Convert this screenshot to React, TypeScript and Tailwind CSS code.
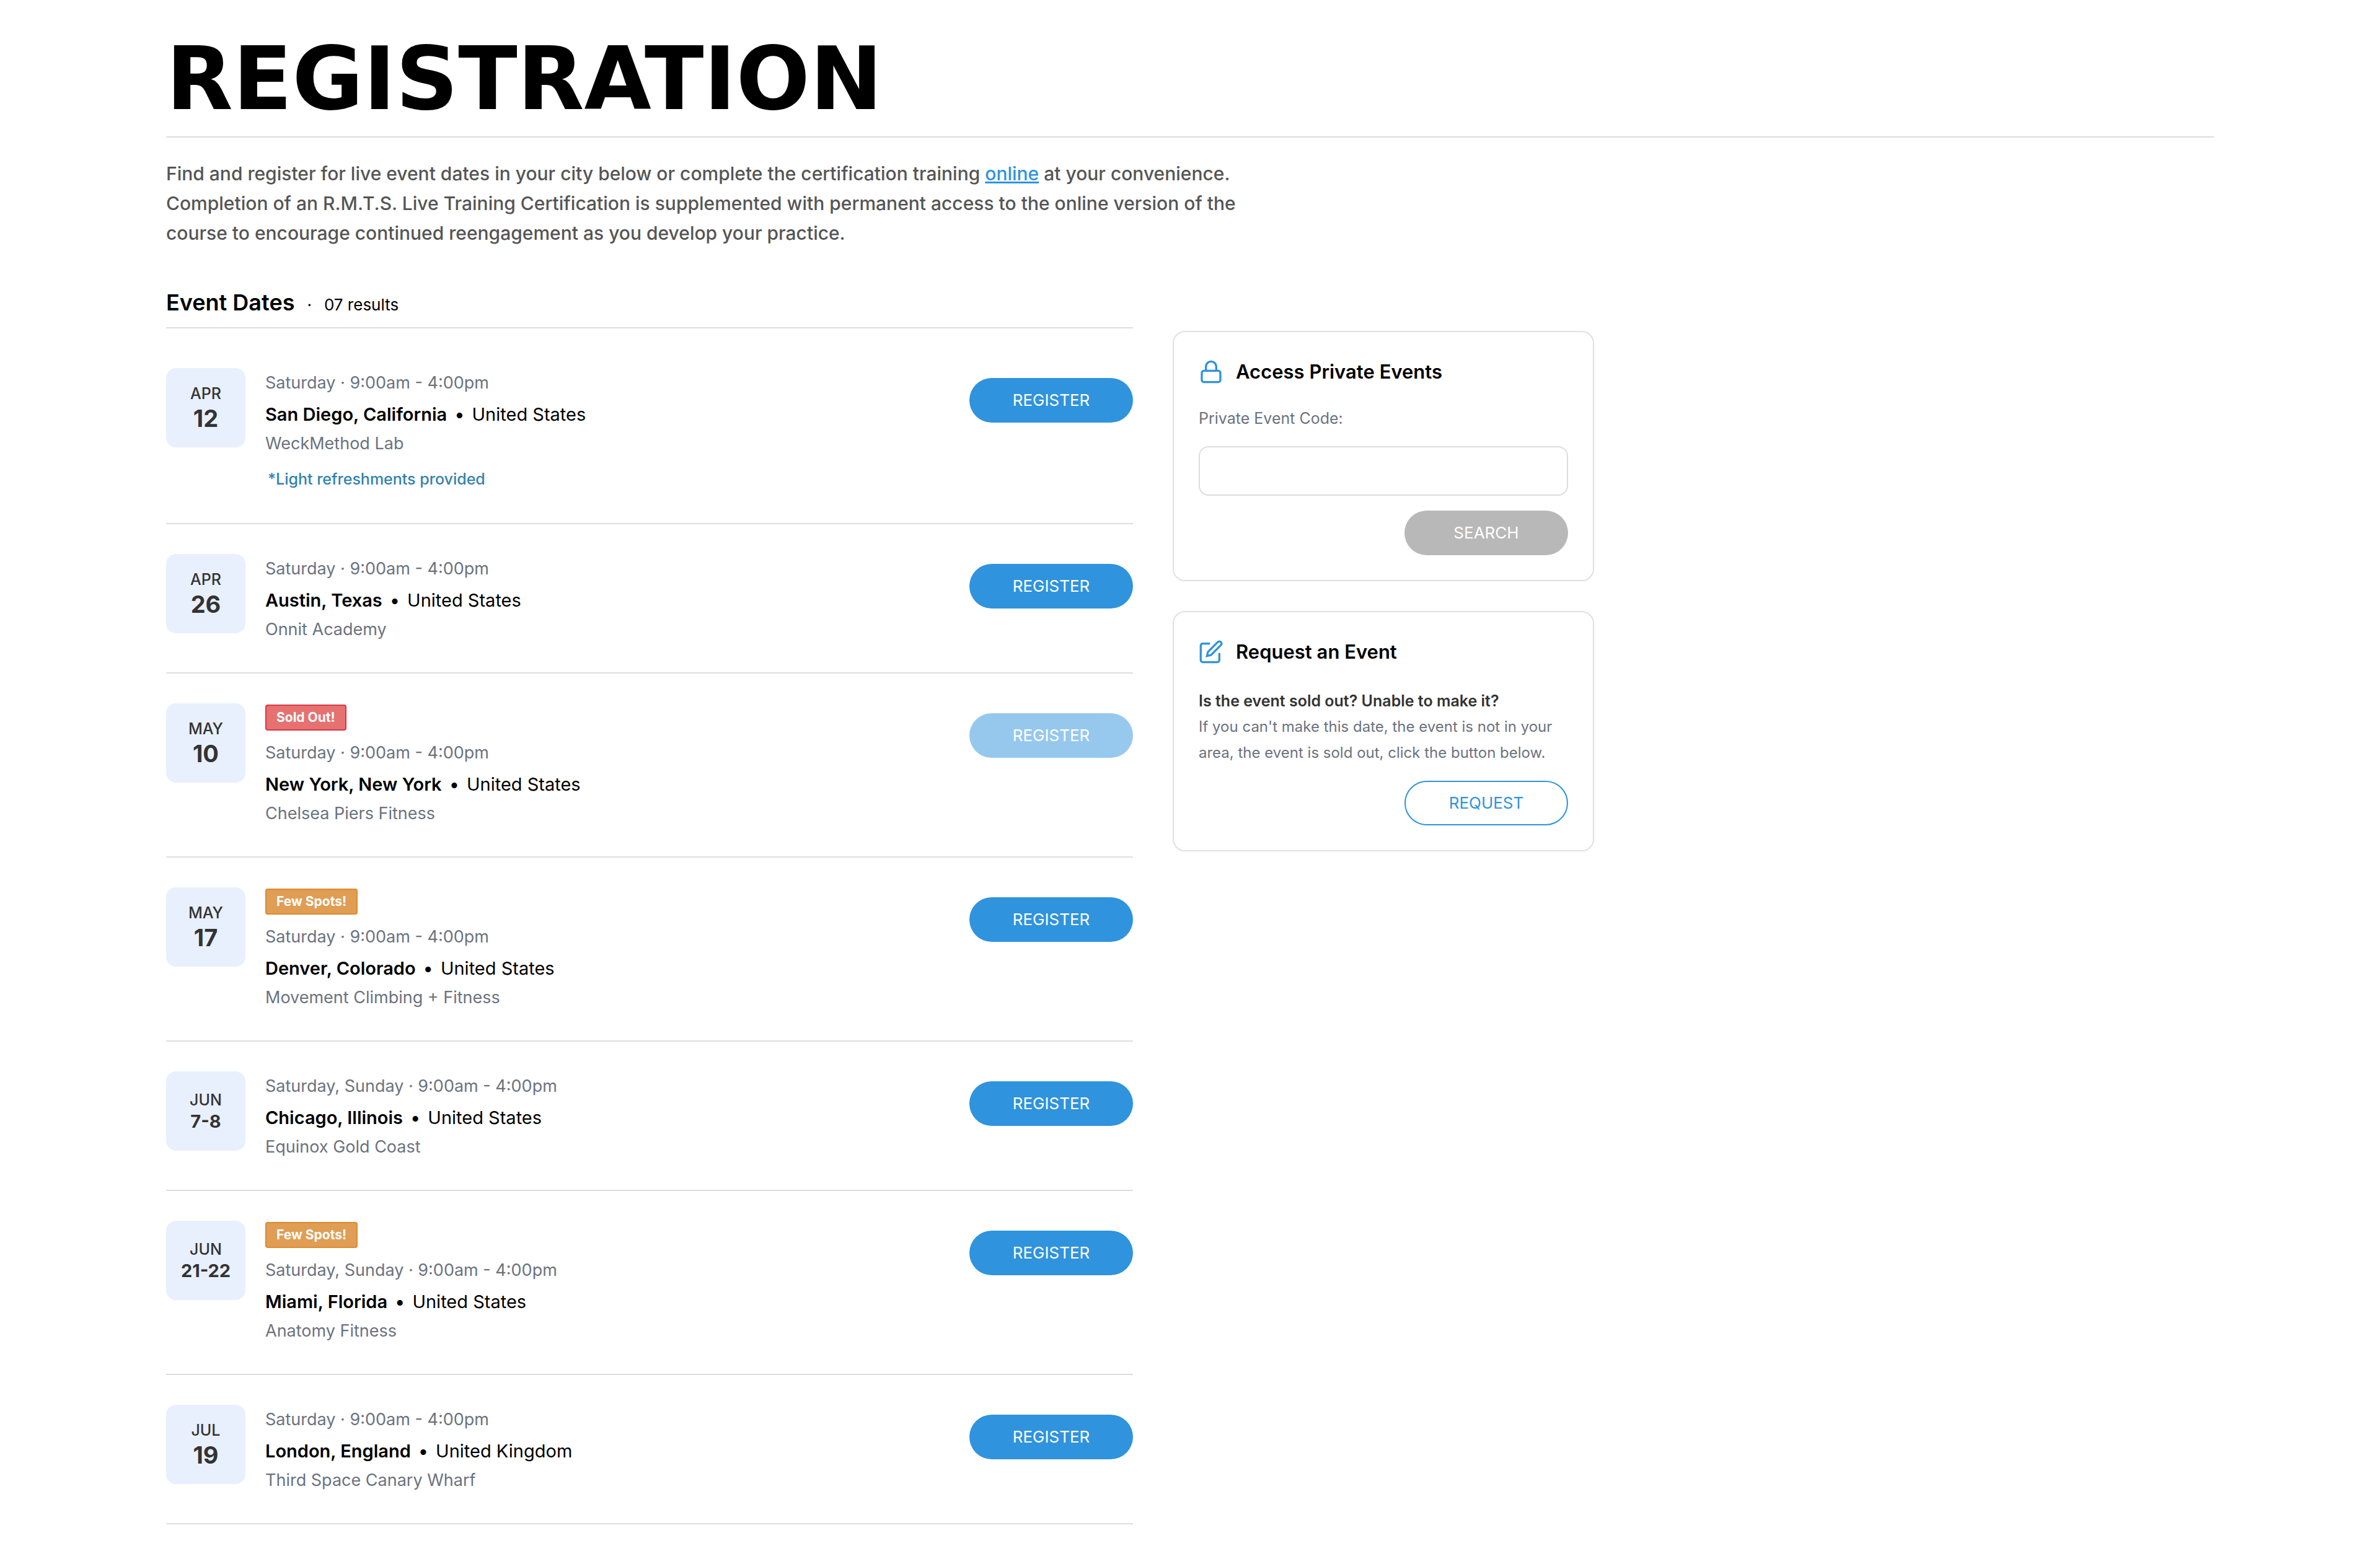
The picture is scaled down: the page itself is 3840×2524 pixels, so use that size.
import type { ReactNode } from "react";
import clsx from "clsx";

type Status = "sold-out" | "few-spots";

interface EventItem {
  month: string;
  day: string;
  time: string;
  city: string;
  country: string;
  venue: string;
  note?: string;
  status?: Status;
}

const events: EventItem[] = [
  {
    month: "APR",
    day: "12",
    time: "Saturday · 9:00am - 4:00pm",
    city: "San Diego, California",
    country: "United States",
    venue: "WeckMethod Lab",
    note: "*Light refreshments provided",
  },
  {
    month: "APR",
    day: "26",
    time: "Saturday · 9:00am - 4:00pm",
    city: "Austin, Texas",
    country: "United States",
    venue: "Onnit Academy",
  },
  {
    month: "MAY",
    day: "10",
    time: "Saturday · 9:00am - 4:00pm",
    city: "New York, New York",
    country: "United States",
    venue: "Chelsea Piers Fitness",
    status: "sold-out",
  },
  {
    month: "MAY",
    day: "17",
    time: "Saturday · 9:00am - 4:00pm",
    city: "Denver, Colorado",
    country: "United States",
    venue: "Movement Climbing + Fitness",
    status: "few-spots",
  },
  {
    month: "JUN",
    day: "7-8",
    time: "Saturday, Sunday · 9:00am - 4:00pm",
    city: "Chicago, Illinois",
    country: "United States",
    venue: "Equinox Gold Coast",
  },
  {
    month: "JUN",
    day: "21-22",
    time: "Saturday, Sunday · 9:00am - 4:00pm",
    city: "Miami, Florida",
    country: "United States",
    venue: "Anatomy Fitness",
    status: "few-spots",
  },
  {
    month: "JUL",
    day: "19",
    time: "Saturday · 9:00am - 4:00pm",
    city: "London, England",
    country: "United Kingdom",
    venue: "Third Space Canary Wharf",
  },
];

const pill = "h-[72px] w-[264px] shrink-0 rounded-full text-[26px] leading-[32px]";

function LockIcon() {
  return (
    <svg className="size-10 shrink-0 text-[#2f93de]" viewBox="0 0 24 24" fill="none" stroke="currentColor" strokeWidth="2" strokeLinecap="round" strokeLinejoin="round" aria-hidden="true">
      <rect x="3" y="11" width="18" height="11" rx="2" />
      <path d="M7 11V7a5 5 0 0 1 10 0v4" />
    </svg>
  );
}

function EditIcon() {
  return (
    <svg className="size-10 shrink-0 text-[#2f93de]" viewBox="0 0 24 24" fill="none" stroke="currentColor" strokeWidth="2" aria-hidden="true">
      <path d="M11 4H4a2 2 0 0 0-2 2v14a2 2 0 0 0 2 2h14a2 2 0 0 0 2-2v-7" />
      <path d="M18.5 2.5a2.121 2.121 0 0 1 3 3L12 15l-4 1 1-4 9.5-9.5z" />
    </svg>
  );
}

function StatusBadge({ status }: { status: Status }) {
  const soldOut = status === "sold-out";
  return (
    <span
      className={clsx(
        "mt-[2px] mb-3 flex h-[42px] w-fit items-center rounded-[4px] border-2 px-4 text-[21px] leading-[28px] font-bold text-white",
        soldOut ? "border-[#dc3545] bg-[#e57171]" : "border-[#dd8b2e] bg-[#e09d54]",
      )}
    >
      {soldOut ? "Sold Out!" : "Few Spots!"}
    </span>
  );
}

function EventRow({ event }: { event: EventItem }) {
  const isRange = event.day.includes("-");
  return (
    <li className="flex items-start gap-8 border-b-2 border-[#dedede] pt-12 pb-[49px]">
      <div className="flex size-32 shrink-0 flex-col items-center justify-center rounded-2xl bg-[#e8f0fe] text-[#333333]">
        <span className="text-[25px] leading-[34px] font-medium">{event.month}</span>
        <span className={clsx("font-bold", isRange ? "text-[29px] leading-[36px]" : "text-[38px] leading-[46px]")}>
          {event.day}
        </span>
      </div>
      <div className="min-w-0 flex-1">
        {event.status && <StatusBadge status={event.status} />}
        <p className="text-[27px] leading-[48px] text-[#6b7280]">{event.time}</p>
        <p className="text-[29px] leading-[54px] text-black">
          <strong className="font-semibold">{event.city}</strong>
          <span className="mx-3">•</span>
          {event.country}
        </p>
        <p className="text-[27px] leading-[40px] text-[#6b7280]">{event.venue}</p>
        {event.note && (
          <p className="mt-[15px] pl-1 text-[25px] leading-[44px] font-medium text-[#3182b0]">{event.note}</p>
        )}
      </div>
      <button
        type="button"
        disabled={event.status === "sold-out"}
        className={clsx(pill, "mt-4 bg-[#2f93de] text-white disabled:opacity-50")}
      >
        REGISTER
      </button>
    </li>
  );
}

function Card({ icon, title, children }: { icon: ReactNode; title: string; children: ReactNode }) {
  return (
    <section className="flex flex-col rounded-[20px] border-2 border-[#e0e0e0] p-10">
      <h3 className="flex items-center gap-5 text-[31px] leading-[48px] font-semibold text-black">
        {icon}
        {title}
      </h3>
      {children}
    </section>
  );
}

export default function App() {
  return (
    <main className="min-h-screen bg-white px-[268px] pt-16 pb-[64px] font-['Inter','Liberation_Sans',sans-serif]">
      <header className="border-b-2 border-[#dddddd] pb-7">
        <h1 className="text-[140px] leading-[128px] font-bold text-black font-['DejaVu_Sans',sans-serif]">
          REGISTRATION
        </h1>
      </header>

      <p className="mt-[34px] max-w-[1760px] text-[30px] leading-[48px] font-medium text-[#555555]">
        Find and register for live event dates in your city below or complete the certification training{" "}
        <a href="#online" className="text-[#2f93de] underline">
          online
        </a>{" "}
        at your convenience. Completion of an R.M.T.S. Live Training Certification is supplemented with permanent
        access to the online version of the course to encourage continued reengagement as you develop your practice.
      </p>

      <div className="mt-16 grid max-w-[2304px] grid-cols-[minmax(0,1fr)_680px] gap-x-16">
        <section>
          <div className="flex items-baseline gap-5 border-b-2 border-[#dddddd] pb-4 text-[26px] leading-[32px] text-black">
            <h2 className="text-[36px] leading-[48px] font-semibold">Event Dates</h2>
            <span>·</span>
            <span>07 results</span>
          </div>
          <ul className="pt-4">
            {events.map((event) => (
              <EventRow key={event.city} event={event} />
            ))}
          </ul>
        </section>

        <aside className="flex flex-col gap-12 pt-[70px]">
          <Card icon={<LockIcon />} title="Access Private Events">
            <form className="flex flex-col" onSubmit={(e) => e.preventDefault()}>
              <label htmlFor="event-code" className="mt-8 text-[25px] leading-[38px] text-[#6b7280]">
                Private Event Code:
              </label>
              <input
                id="event-code"
                type="text"
                className="mt-[26px] h-20 w-full rounded-2xl border-2 border-[#dddddd] bg-white px-6 text-[27px] text-black"
              />
              <button type="submit" className={clsx(pill, "mt-6 self-end bg-[#b8b8b8] text-white")}>
                SEARCH
              </button>
            </form>
          </Card>

          <Card icon={<EditIcon />} title="Request an Event">
            <p className="mt-[34px] text-[25px] leading-[42px] font-semibold text-[#333333]">
              Is the event sold out? Unable to make it?
            </p>
            <p className="text-[24px] leading-[42px] text-[#6b7280]">
              If you can't make this date, the event is not in your area, the event is sold out, click the button
              below.
            </p>
            <button
              type="button"
              className={clsx(pill, "mt-6 self-end border-2 border-[#2f93de] bg-white text-[#2f93de]")}
            >
              REQUEST
            </button>
          </Card>
        </aside>
      </div>
    </main>
  );
}
